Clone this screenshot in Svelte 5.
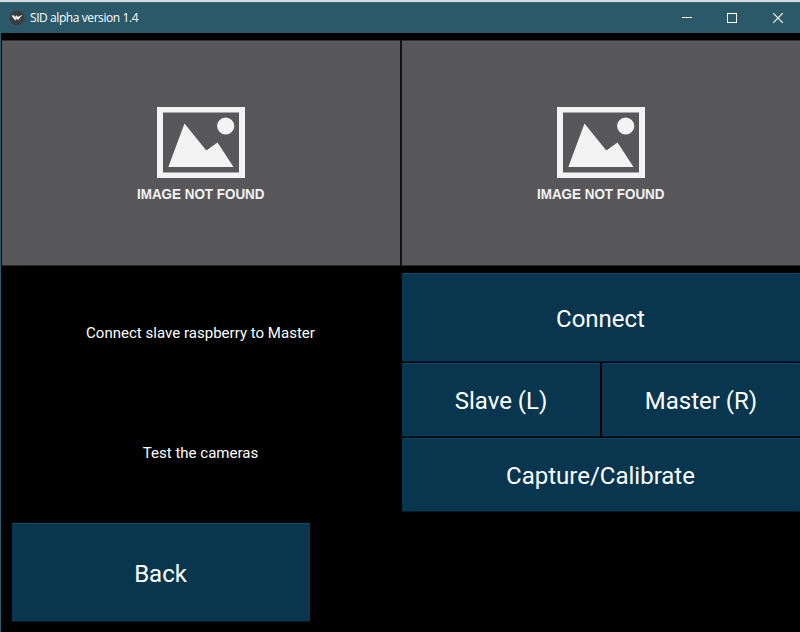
<script>
  const previews = ['left', 'right'];
</script>

<div class="window">
  <header>
    <svg class="logo" width="16" height="16" viewBox="0 0 16 16">
      <circle cx="8" cy="8" r="7.6" fill="#3b3d41" />
      <path d="M2.4 5.4 4.8 5.2 6.1 7 7.3 5.3 9 7 10.3 5.9 13.6 5.1 11.2 7.2 9.3 10.2 7.8 8.8 6.3 10.4 4.4 8.2Z" fill="#e9ebec" />
    </svg>
    <span class="title">SID alpha version 1.4</span>
    <div class="controls">
      <svg width="12" height="12" viewBox="0 0 12 12"><path d="M1 5.5H11" /></svg>
      <svg width="12" height="12" viewBox="0 0 12 12"><path d="M1.5 1.5H10.5V10.5H1.5Z" /></svg>
      <svg width="12" height="12" viewBox="0 0 12 12"><path class="cross" d="M1.2 1.2 10.8 10.8M10.8 1.2 1.2 10.8" /></svg>
    </div>
  </header>

  <main>
    <div class="previews">
      {#each previews as side (side)}
        <div class="preview">
          <svg width="88" height="71" viewBox="0 0 88 71" fill="#f3f3f3">
            <path fill-rule="evenodd" d="M0 0H88V71H0ZM6 5.5V65.5H82V5.5Z" />
            <path d="M27.5 16.5 49.3 43.5 60.5 35.5 76.5 60H11.3Z" />
            <circle cx="68.7" cy="19" r="8.6" />
          </svg>
          <svg class="caption" width="128" height="16"><text x="0" y="13" textLength="127.5" lengthAdjust="spacingAndGlyphs">IMAGE NOT FOUND</text></svg>
        </div>
      {/each}
    </div>

    <div class="panel">
      <div class="labels">
        <p>Connect slave raspberry to Master</p>
        <p>Test the cameras</p>
      </div>
      <div class="actions">
        <button class="connect">Connect</button>
        <div class="pair">
          <button>Slave (L)</button>
          <button>Master (R)</button>
        </div>
        <button class="capture">Capture/Calibrate</button>
      </div>
    </div>

    <button class="back">Back</button>
  </main>
</div>

<style>
  :global(body) { margin: 0; background: #000; overflow: hidden; }
  .window {
    box-sizing: border-box;
    width: 800px;
    height: 632px;
    border-top: 2px solid #d3d8dc;
    background: #000;
    color: #fff;
    font-family: Roboto, sans-serif;
  }
  header {
    box-sizing: border-box;
    display: flex;
    align-items: center;
    height: 31px;
    padding: 0 16px 0 9px;
    background: #2b5969;
    border-top: 1px solid #376675;
  }
  .logo { flex: none; }
  .title {
    margin: 0 0 1px 5px;
    font: 12px/16px "Open Sans", "Noto Sans", sans-serif;
    letter-spacing: -0.42px;
    white-space: nowrap;
  }
  .controls { display: flex; gap: 33px; margin: 0 0 1px auto; }
  .controls svg:last-child { margin-left: 1px; }
  .controls svg { stroke: #fff; fill: none; stroke-width: 1; shape-rendering: crispEdges; }
  .controls .cross { shape-rendering: auto; stroke-width: 1.2; }
  main {
    box-sizing: border-box;
    height: 599px;
    padding: 7px 0 0 1px;
    border-left: 1px solid #2b5969;
  }
  .previews { display: flex; gap: 2px; background: #111214; }
  .preview {
    box-sizing: border-box;
    display: flex;
    flex-direction: column;
    align-items: center;
    width: 398px;
    height: 226px;
    padding-top: 66px;
    background: #58585a;
    border-top: 1px solid #303031;
    border-bottom: 1px solid #2b2b2c;
  }
  .caption { margin-top: 8px; overflow: visible; }
  .caption text { fill: #f3f3f3; font: bold 14px "Liberation Sans", sans-serif; }
  .panel { display: flex; margin-top: 7px; }
  .labels { width: 400px; }
  p {
    display: flex;
    align-items: center;
    justify-content: center;
    height: 120px;
    margin: 0;
    padding-right: 3px;
    font-size: 15px;
    letter-spacing: 0.02px;
  }
  .actions { display: flex; flex-direction: column; gap: 1px; width: 398px; }
  .pair { display: flex; gap: 2px; }
  .pair button { width: 198px; height: 74px; }
  button {
    box-sizing: border-box;
    margin: 0;
    padding: 2px 1px 0 0;
    border: 0;
    border-radius: 1px;
    background: #08364f;
    box-shadow: inset 0 1px #104a69, inset 0 -1px #031d2c;
    color: #fff;
    font: 24px/28px Roboto, sans-serif;
  }
  .pair button { padding-right: 0; }
  .connect { height: 89px; }
  .capture { height: 74px; }
  .back { display: block; width: 298px; height: 99px; margin: 10px 0 0 10px; }
</style>
